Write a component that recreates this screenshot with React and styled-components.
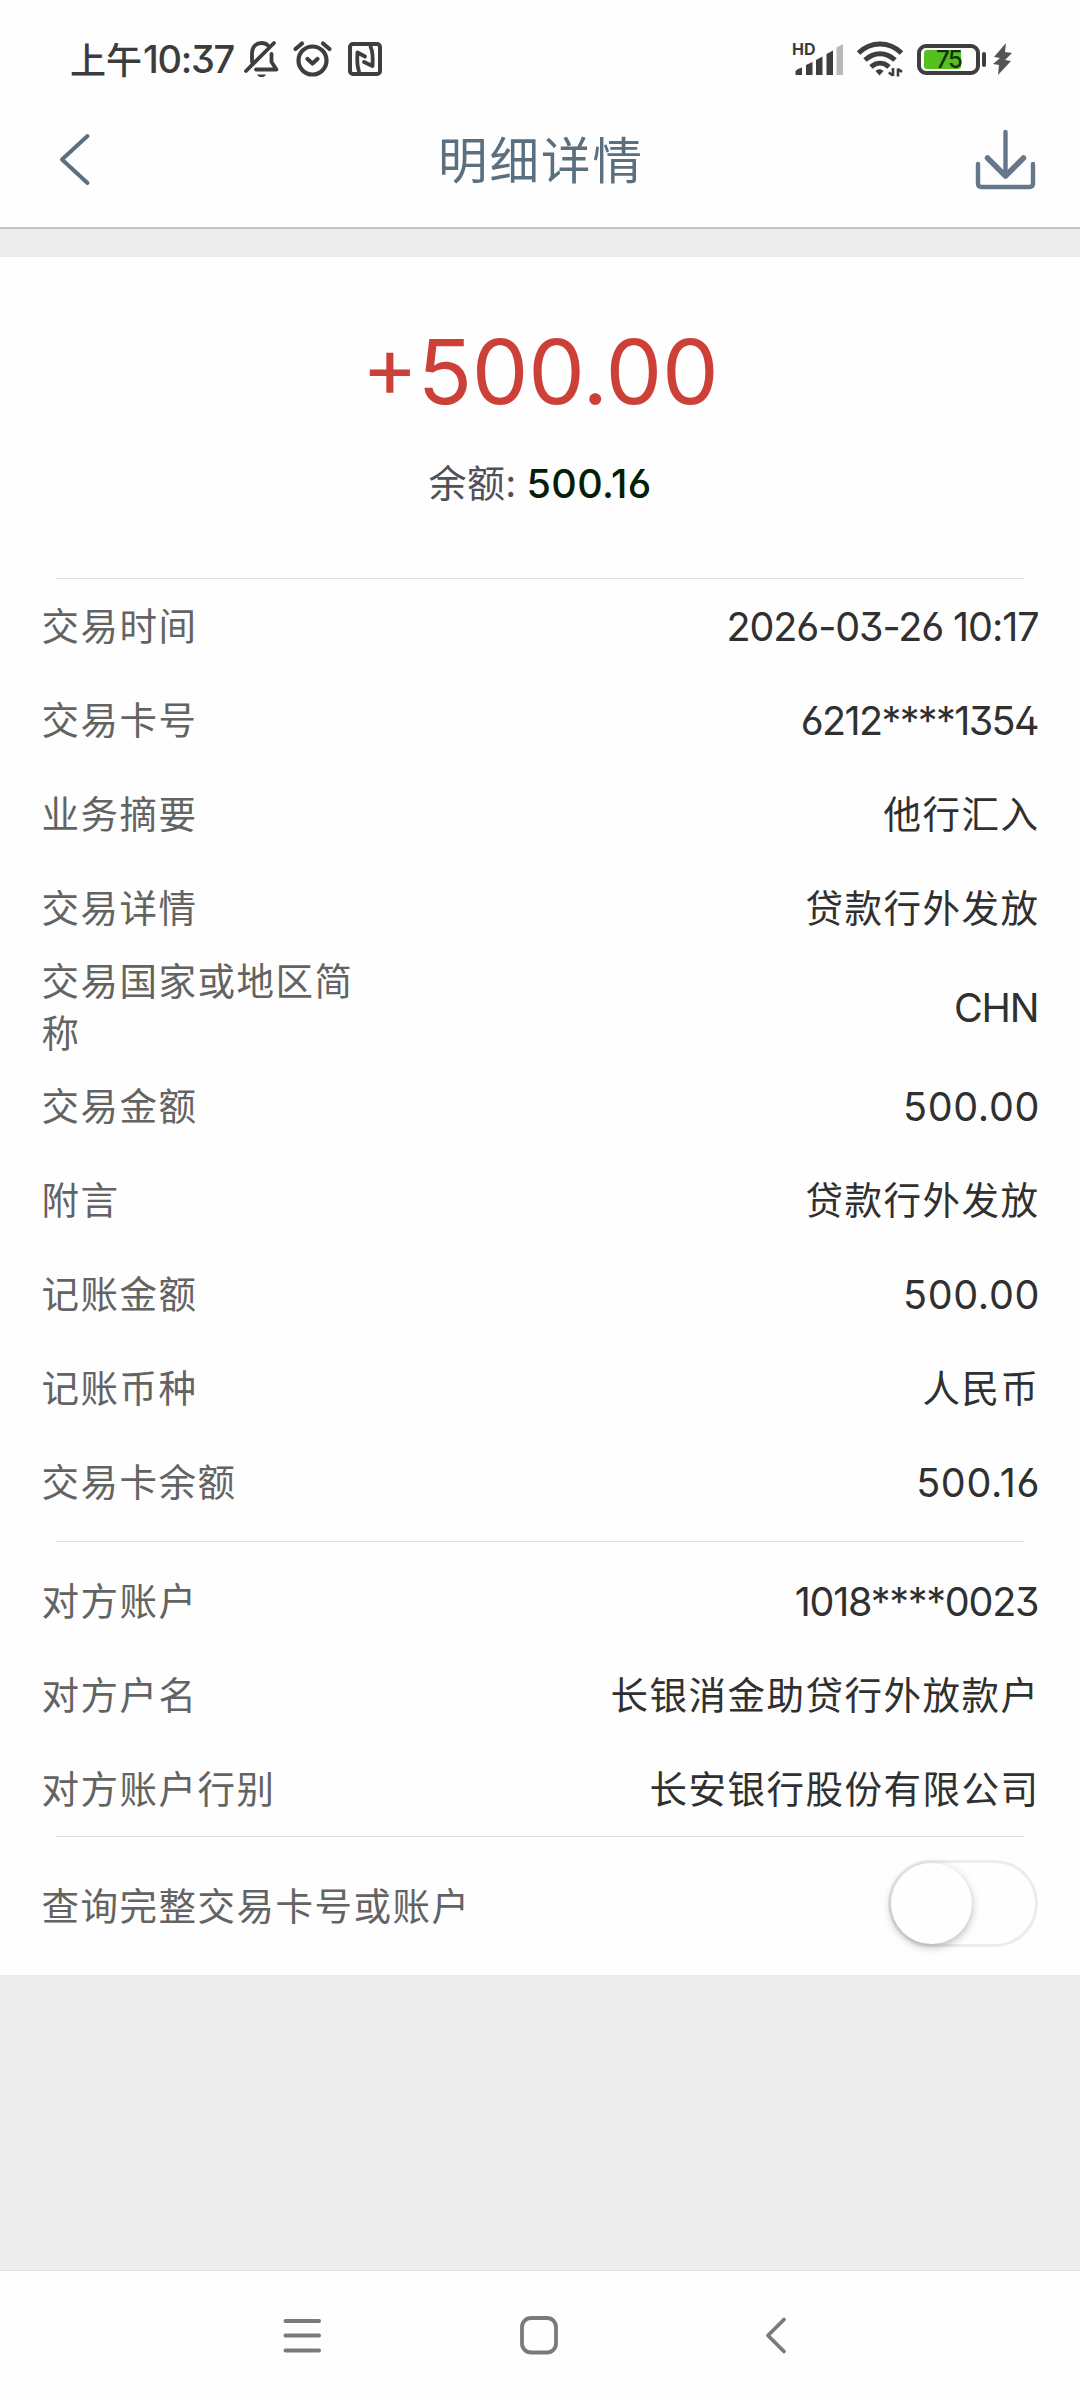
import React, { useState } from "react";
import styled, { createGlobalStyle } from "styled-components";

const GlobalStyle = createGlobalStyle`
  *, *::before, *::after { box-sizing: border-box; }
  body {
    margin: 0;
    background: #ededed;
    font-family: "Noto Sans CJK SC", sans-serif;
    -webkit-font-smoothing: antialiased;
  }
`;

const Screen = styled.div`
  width: 1080px;
  height: 2400px;
  display: flex;
  flex-direction: column;
  background: #ededed;
  overflow: hidden;
`;

const Digits = styled.span`
  font-family: Inter, "Liberation Sans", sans-serif;
  font-feature-settings: "ss01" 1, "cv09" 1;
`;

const StatusBar = styled.div`
  height: 120px;
  flex: none;
  display: flex;
  justify-content: space-between;
  padding: 34px 68px 0 70px;
  background: #fefefe;
  color: #3c3c3c;
`;

const StatusGroup = styled.div`
  display: flex;
  align-items: center;
  height: 50px;
`;

const Clock = styled.div`
  display: flex;
  align-items: center;
  width: 171px;
  height: 50px;
  padding-bottom: 2px;
  font-size: 36px;
  font-weight: 500;
  line-height: 50px;
  white-space: nowrap;
`;

const ClockDigits = styled(Digits)`
  margin-left: 1px;
  padding-top: 2px;
  font-size: 38px;
  letter-spacing: -1.3px;
`;

const Glyph = styled.svg`
  display: block;
  flex: none;
  overflow: visible;
  margin-left: ${(p) => p.$gap || 0}px;
`;

const Signal = styled.div`
  position: relative;
  width: 50px;
  height: 34px;
`;

const HdTag = styled.span`
  position: absolute;
  left: -2px;
  top: 0;
  font: 700 16px/14px Inter, sans-serif;
`;

const Battery = styled.div`
  position: relative;
  width: 63px;
  height: 31px;
  margin-left: 14px;
  border: 4px solid #3e3e3e;
  border-radius: 9px;
  padding: 2px 3px;

  &::after {
    content: "";
    position: absolute;
    right: -10px;
    top: 4px;
    width: 4px;
    height: 15px;
    border-radius: 2px;
    background: #3e3e3e;
  }
`;

const BatteryFill = styled.div`
  height: 19px;
  border-radius: 3px;
  background: #55c11f;
`;

const BatteryLevel = styled(Digits)`
  position: absolute;
  left: 15px;
  top: 0;
  font-size: 24px;
  font-weight: 500;
  line-height: 23px;
  letter-spacing: -1.5px;
  color: #12330a;
`;

const Header = styled.header`
  height: 109px;
  flex: none;
  display: flex;
  align-items: flex-start;
  justify-content: space-between;
  padding: 8px 42px 0 58px;
  background: #fefefe;
  border-bottom: 2px solid #bcc8cb;
`;

const IconButton = styled.button`
  display: flex;
  padding: 0;
  border: 0;
  background: none;
  width: 64px;
  height: 64px;
`;

const Title = styled.h1`
  margin: -2px 14px 0 0;
  font-size: 49.5px;
  font-weight: 400;
  line-height: 64px;
  letter-spacing: 2px;
  color: #5b6f7e;
`;

const Card = styled.main`
  margin-top: 28px;
  height: 1718px;
  flex: none;
  background: #fefefe;
`;

const Summary = styled.section`
  height: 321px;
  display: flex;
  flex-direction: column;
  align-items: center;
  padding-top: 59px;
`;

const Amount = styled(Digits)`
  display: flex;
  font-size: 90px;
  line-height: 112px;
  letter-spacing: -0.4px;
  color: #cd4038;
`;

const Sign = styled.span`
  margin: -5px 0 0 0;
  font-size: 85px;
`;

const Balance = styled.div`
  display: flex;
  align-items: center;
  margin-top: 26px;
  font-size: 38px;
  line-height: 52px;
  letter-spacing: 0.5px;
  color: #50505a;
  white-space: nowrap;
`;

const BalanceLabel = styled.span`
  padding-bottom: 2px;
`;

const BalanceValue = styled(Digits)`
  padding-top: 4px;
  margin-left: 10px;
  font-size: 39.5px;
  font-weight: 500;
  letter-spacing: 0.4px;
  color: #032006;
`;

const Divider = styled.hr`
  height: 1px;
  margin: 0 56px;
  border: 0;
  background: #dedede;
`;

const Rows = styled.section`
  padding: ${(p) => p.$pad || "0"};
`;

const Row = styled.div`
  display: flex;
  align-items: center;
  justify-content: space-between;
  height: ${(p) => p.$height || 94}px;
  padding: 0 42px;
`;

const Label = styled.span`
  width: ${(p) => p.$width || "320px"};
  margin-left: -0.5px;
  padding-bottom: 5px;
  font-size: 37.5px;
  line-height: 52px;
  letter-spacing: 1.5px;
  color: #636363;
`;

const Value = styled.span`
  padding-bottom: 5px;
  font-size: 37.5px;
  line-height: 52px;
  letter-spacing: 1.5px;
  margin-right: -1.5px;
  color: #303030;
  white-space: nowrap;
`;

const NumberValue = styled(Digits)`
  padding-top: 1px;
  font-size: 39.5px;
  line-height: 52px;
  letter-spacing: ${(p) => p.$spacing || 0}px;
  margin-right: ${(p) => -(p.$spacing || 0) - 1.5}px;
  color: #303030;
  white-space: nowrap;
`;

const Toggle = styled.button`
  display: block;
  width: 150px;
  height: 87px;
  margin-top: -6px;
  padding: 0;
  border: 3px solid #ececec;
  border-radius: 44px;
  background: #fefefe;
`;

const Knob = styled.span`
  display: block;
  width: 81px;
  height: 81px;
  border-radius: 50%;
  background: #fefefe;
  box-shadow: 0 3px 9px rgba(0, 0, 0, 0.28);
  transform: translateX(${(p) => (p.$on ? 63 : 0)}px);
`;

const Spacer = styled.div`
  flex: 1;
`;

const NavBar = styled.nav`
  height: 130px;
  flex: none;
  display: flex;
  justify-content: center;
  gap: 197px;
  padding: 45px 2px 0 0;
  background: #fefefe;
  border-top: 1px solid #e2e2e2;
`;

const NavButton = styled.button`
  display: flex;
  width: 40px;
  height: 40px;
  padding: 0;
  border: 0;
  background: none;
`;

const transaction = [
  { label: "交易时间", value: "2026-03-26 10:17", numeric: true, spacing: -1.1 },
  { label: "交易卡号", value: "6212****1354", numeric: true, spacing: -1.6 },
  { label: "业务摘要", value: "他行汇入" },
  { label: "交易详情", value: "贷款行外发放" },
  { label: "交易国家或地区简称", value: "CHN", numeric: true, height: 104, spacing: -1.2 },
  { label: "交易金额", value: "500.00", numeric: true, spacing: 0.7 },
  { label: "附言", value: "贷款行外发放" },
  { label: "记账金额", value: "500.00", numeric: true, spacing: 0.7 },
  { label: "记账币种", value: "人民币" },
  { label: "交易卡余额", value: "500.16", numeric: true, spacing: 0.7 },
];

const counterparty = [
  { label: "对方账户", value: "1018****0023", numeric: true, spacing: -1.25 },
  { label: "对方户名", value: "长银消金助贷行外放款户" },
  { label: "对方账户行别", value: "长安银行股份有限公司" },
];

function DetailRow({ item }) {
  return (
    <Row $height={item.height}>
      <Label>{item.label}</Label>
      {item.numeric ? (
        <NumberValue $spacing={item.spacing}>{item.value}</NumberValue>
      ) : (
        <Value>{item.value}</Value>
      )}
    </Row>
  );
}

function MutedBell() {
  return (
    <Glyph $gap={3} width="35" height="38" viewBox="0 0 35 38" fill="none" stroke="#3e3e3e" strokeWidth="3.8" strokeLinecap="round" strokeLinejoin="round">
      <path d="M8 22V13.500C8 7 12 3 17.500 3c2.600 0 5 .9 6.500 2.500" />
      <path d="M2 31 30 3" />
      <path d="M27.500 14v8l5 7.500H12" />
      <path d="M13 34.500h9c-1 2-2.500 2.500-4.500 2.500s-3.500-.5-4.500-2.500z" fill="#3e3e3e" stroke="none" />
    </Glyph>
  );
}

function AlarmClock() {
  return (
    <Glyph $gap={14} width="39" height="38" viewBox="0 0 39 38" fill="none" stroke="#3e3e3e" strokeWidth="4.200" strokeLinecap="round" strokeLinejoin="round">
      <circle cx="19.500" cy="20.500" r="14" />
      <path d="M2.500 9 9 3.500M36.500 9 30 3.500" />
      <path d="m14.500 19 5 4.500 5-4.500" />
    </Glyph>
  );
}

function Nfc() {
  return (
    <Glyph $gap={16} width="34" height="34" viewBox="0 0 34 34" fill="none" stroke="#3e3e3e" strokeWidth="4" strokeLinecap="round" strokeLinejoin="round">
      <rect x="2" y="2" width="30" height="30" rx="3" />
      <path strokeWidth="3.800" d="M11 29.500C9 24 9 17 9.500 10.500L17 14.500" />
      <path strokeWidth="3.800" d="M22.500 4.500c2.500 5.500 2.500 12.500 2 19.500L16 20" />
    </Glyph>
  );
}

function SignalBars() {
  return (
    <Signal>
      <HdTag>HD</HdTag>
      <Glyph width="50" height="34" viewBox="0 0 50 34" fill="#3e3e3e">
        <path d="M1.500 33v-4l2.500-2 4-1.500V33zM12 33V23l6.500-3v13zM22 33V18l6.500-3.500V33zM32.500 33V12l6.500-3.500V33z" />
        <path d="M42.500 33V5.500L49 2v31z" fill="#b9b9b9" />
      </Glyph>
    </Signal>
  );
}

function Wifi() {
  return (
    <Glyph $gap={13} width="46" height="34" viewBox="0 0 46 34" fill="none" stroke="#3e3e3e" strokeWidth="5">
      <path d="M1.500 11C14-1 32-1 44.500 11" />
      <path d="M8 18c9-8.500 21-8.500 30 0" />
      <path d="M14 25c5.500-5 12.500-5 18 0" />
      <path d="M18.500 29c2.500-2.300 5.500-2.300 8 0l-4 4.500z" fill="#3e3e3e" stroke="none" />
      <path strokeWidth="2.600" d="M36 26v8M35.800 33.500l-4-3M41 34.500v-8M41 27l4 3" />
    </Glyph>
  );
}

export default function App() {
  const [showFull, setShowFull] = useState(false);
  return (
    <>
      <GlobalStyle />
      <Screen>
        <StatusBar>
          <StatusGroup>
            <Clock>
              上午<ClockDigits>10:37</ClockDigits>
            </Clock>
            <MutedBell />
            <AlarmClock />
            <Nfc />
          </StatusGroup>
          <StatusGroup>
            <SignalBars />
            <Wifi />
            <Battery>
              <BatteryFill style={{ width: "75%" }} />
              <BatteryLevel>75</BatteryLevel>
            </Battery>
            <Glyph $gap={13} width="19" height="32" viewBox="0 0 19 32" fill="#555">
              <path d="M13 0 1 14l6 1-7 6 6 1-1 10 13-14-6-1 7-7-7-1z" />
            </Glyph>
          </StatusGroup>
        </StatusBar>

        <Header>
          <IconButton aria-label="返回">
            <Glyph width="34" height="64" viewBox="0 0 34 64" fill="none" stroke="#5b6f7e" strokeWidth="4" strokeLinecap="round" strokeLinejoin="round">
              <path d="M29.500 8 4 31.500 29.500 55" />
            </Glyph>
          </IconButton>
          <Title>明细详情</Title>
          <IconButton aria-label="下载">
            <Glyph width="64" height="64" viewBox="0 0 64 64" fill="none" stroke="#64788a" strokeWidth="4.400" strokeLinecap="round" strokeLinejoin="round">
              <path d="M4 36v19.500q0 3.500 3.500 3.500h48q3.500 0 3.500-3.500V36" />
              <path d="M31.500 4v44" />
              <path strokeWidth="5.500" d="m13.500 30 18 18 18-18" />
            </Glyph>
          </IconButton>
        </Header>

        <Card>
          <Summary>
            <Amount>
              <Sign>+</Sign>500.00
            </Amount>
            <Balance>
              <BalanceLabel>余额:</BalanceLabel>
              <BalanceValue>500.16</BalanceValue>
            </Balance>
          </Summary>
          <Divider />
          <Rows $pad="0 0 12px">
            {transaction.map((item) => (
              <DetailRow key={item.label} item={item} />
            ))}
          </Rows>
          <Divider />
          <Rows $pad="12px 0 0">
            {counterparty.map((item) => (
              <DetailRow key={item.label} item={item} />
            ))}
          </Rows>
          <Divider />
          <Row $height={138}>
            <Label $width="auto">查询完整交易卡号或账户</Label>
            <Toggle role="switch" aria-checked={showFull} onClick={() => setShowFull(!showFull)}>
              <Knob $on={showFull} />
            </Toggle>
          </Row>
        </Card>

        <Spacer />

        <NavBar>
          <NavButton aria-label="菜单">
            <Glyph width="40" height="40" viewBox="0 0 40 40" fill="none" stroke="#7a7a7a" strokeWidth="4" strokeLinecap="round">
              <path d="M3.500 5h33.500M3.500 19.500h33.500M3.500 34.500h33.500" />
            </Glyph>
          </NavButton>
          <NavButton aria-label="主页">
            <Glyph width="40" height="40" viewBox="0 0 40 40" fill="none" stroke="#7a7a7a" strokeWidth="3.800">
              <rect x="3" y="2" width="34" height="34.500" rx="9" />
            </Glyph>
          </NavButton>
          <NavButton aria-label="后退">
            <Glyph width="40" height="40" viewBox="0 0 40 40" fill="none" stroke="#7a7a7a" strokeWidth="3.800" strokeLinecap="round" strokeLinejoin="round">
              <path d="M28 3.500 12 19.500 28 35.500" />
            </Glyph>
          </NavButton>
        </NavBar>
      </Screen>
    </>
  );
}
